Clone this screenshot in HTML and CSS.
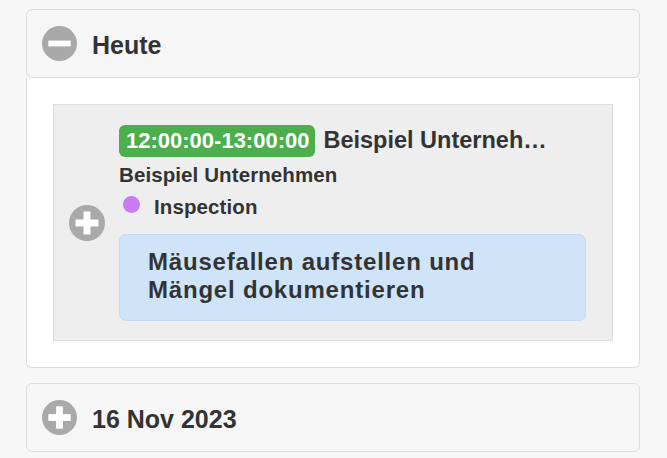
FILE: index.html
```html
<!DOCTYPE html>
<html lang="de">
<head>
<meta charset="utf-8">
<title>Termine</title>
<link rel="stylesheet" href="styles.css">
</head>
<body>
<div class="page">
  <section class="collapsible open">
    <div class="coll-head">
      <svg class="disc" viewBox="0 0 36 36" width="35" height="35" aria-hidden="true">
        <circle cx="18" cy="18" r="18" fill="#a9a9a9"/>
        <rect x="6.5" y="15" width="23" height="6" fill="#fff"/>
      </svg>
      <h2 class="coll-title">Heute</h2>
    </div>
    <div class="coll-body">
      <div class="event">
        <svg class="disc" viewBox="0 0 36 36" width="36" height="36" aria-hidden="true">
          <circle cx="18" cy="18" r="18" fill="#a9a9a9"/>
          <rect x="6.5" y="14.5" width="23" height="7" fill="#fff"/>
          <rect x="14.5" y="6.5" width="7" height="23" fill="#fff"/>
        </svg>
        <div class="event-main">
          <div class="event-top">
            <span class="time-badge">12:00:00-13:00:00</span>
            <span class="event-title">Beispiel Unternehmen</span>
          </div>
          <div class="event-company">Beispiel Unternehmen</div>
          <div class="event-type"><span class="type-dot"></span>Inspection</div>
          <div class="event-note">Mäusefallen aufstellen und Mängel dokumentieren</div>
        </div>
      </div>
    </div>
  </section>

  <section class="collapsible closed">
    <div class="coll-head">
      <svg class="disc" viewBox="0 0 36 36" width="35" height="35" aria-hidden="true">
        <circle cx="18" cy="18" r="18" fill="#a9a9a9"/>
        <rect x="6.5" y="14.5" width="23" height="7" fill="#fff"/>
        <rect x="14.5" y="6.5" width="7" height="23" fill="#fff"/>
      </svg>
      <h2 class="coll-title">16 Nov 2023</h2>
    </div>
  </section>
</div>
</body>
</html>
```

FILE: styles.css
```css
* { box-sizing: border-box; }

html, body {
  margin: 0;
  padding: 0;
  background: #f8f7f7;
  font-family: "Liberation Sans", Arial, sans-serif;
  color: #333;
}

.page {
  padding: 9px 27px 0 26px;
  display: flex;
  flex-direction: column;
  gap: 15px;
}

.coll-head {
  height: 69px;
  display: flex;
  align-items: center;
  gap: 15px;
  padding-left: 15px;
  background: #f6f6f6;
  border: 1px solid #dcdcdc;
  border-radius: 6px;
}

.disc { flex: none; display: block; }

.coll-title {
  margin: 0;
  padding-top: 2px;
  font-size: 25px;
  line-height: 30px;
  font-weight: bold;
  color: #333;
}

.coll-body {
  background: #fff;
  border: 1px solid #dcdcdc;
  border-top: none;
  border-radius: 0 0 6px 6px;
  padding: 26px;
}

.event {
  display: flex;
  align-items: center;
  gap: 14px;
  background: #eeeeee;
  border: 1px solid #dedede;
  padding: 20px 26px 19px 15px;
}

.event-main {
  flex: 1;
  min-width: 0;
  display: flex;
  flex-direction: column;
}

.event-top {
  display: flex;
  align-items: baseline;
  gap: 8px;
  height: 32px;
}

.time-badge {
  flex: none;
  background: #4cae4c;
  color: #fff;
  font-weight: bold;
  font-size: 22px;
  line-height: 32px;
  padding: 0 6px 0 7px;
  border-radius: 6px;
}

.event-title {
  flex: 0 1 auto;
  max-width: 240px;
  font-weight: bold;
  font-size: 23.5px;
  white-space: nowrap;
  overflow: hidden;
  text-overflow: ellipsis;
}

.event-company {
  margin-top: 2px;
  font-weight: bold;
  font-size: 20.5px;
  line-height: 32px;
  letter-spacing: 0.1px;
}

.event-type {
  display: flex;
  align-items: center;
  font-weight: bold;
  font-size: 20.5px;
  line-height: 32px;
  letter-spacing: 0.1px;
}

.type-dot {
  flex: none;
  width: 17px;
  height: 17px;
  border-radius: 50%;
  background: #c97cf2;
  margin: 0 14px 5px 4px;
}

.event-note {
  margin-top: 11px;
  background: #cfe4f8;
  border: 1px solid #c3d9ef;
  border-radius: 7px;
  padding: 13px 20px 16px 28px;
  font-weight: bold;
  font-size: 24px;
  line-height: 28px;
  letter-spacing: 0.8px;
  color: #333;
}
```
